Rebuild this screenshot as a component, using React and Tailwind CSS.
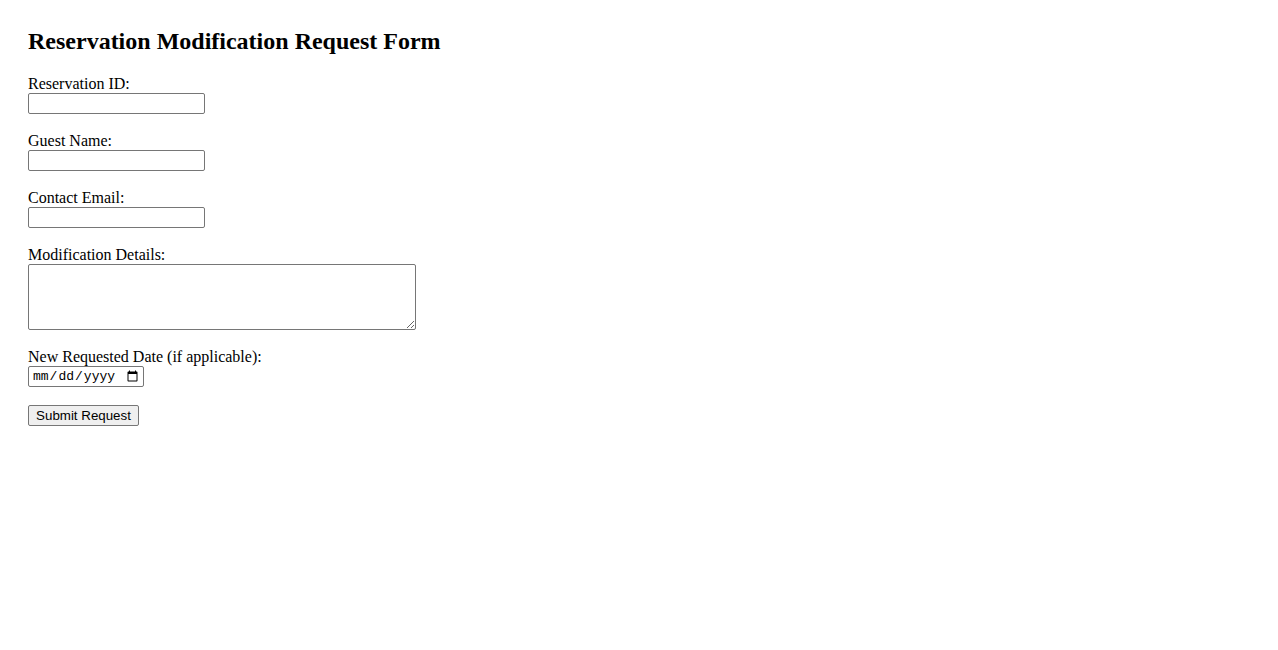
export default function App() {
  const serif = 'font-["Liberation_Serif",_"Times_New_Roman",_serif]'
  return (
    <div className={`min-h-screen bg-white text-black pt-[27px] pl-[28px] ${serif}`}>
      <h2 className="text-[24px] font-bold leading-[28px] mb-[20px]">
        Reservation Modification Request Form
      </h2>
      <form className="flex flex-col items-start" onSubmit={(e) => e.preventDefault()}>
        <label className="text-[16px] leading-[18px]">Reservation ID:</label>
        <input
          type="text"
          className="w-[177px] h-[21px] border border-[#767676] rounded-[2px] px-[2px] text-[13.33px] font-['Liberation_Sans',_Arial,_sans-serif] mb-[18px]"
        />
        <label className="text-[16px] leading-[18px]">Guest Name:</label>
        <input
          type="text"
          className="w-[177px] h-[21px] border border-[#767676] rounded-[2px] px-[2px] text-[13.33px] font-['Liberation_Sans',_Arial,_sans-serif] mb-[18px]"
        />
        <label className="text-[16px] leading-[18px]">Contact Email:</label>
        <input
          type="email"
          className="w-[177px] h-[21px] border border-[#767676] rounded-[2px] px-[2px] text-[13.33px] font-['Liberation_Sans',_Arial,_sans-serif] mb-[18px]"
        />
        <label className="text-[16px] leading-[18px]">Modification Details:</label>
        <textarea
          className="w-[388px] h-[66px] border border-[#767676] rounded-[2px] px-[2px] text-[13.33px] font-['Liberation_Mono',_monospace] mb-[18px] resize"
        />
        <label className="text-[16px] leading-[18px]">New Requested Date (if applicable):</label>
        <input
          type="date"
          className="w-[116px] h-[21px] border border-[#767676] rounded-[2px] pl-[3px] pr-[2px] text-[13px] font-['Liberation_Mono',_monospace] mb-[18px]"
        />
        <button
          type="submit"
          className="w-[111px] h-[21px] px-[6px] bg-[#efefef] border border-[#767676] rounded-[2px] text-[13.33px] leading-[17px] font-['Liberation_Sans',_Arial,_sans-serif]"
        >
          Submit Request
        </button>
      </form>
    </div>
  )
}
